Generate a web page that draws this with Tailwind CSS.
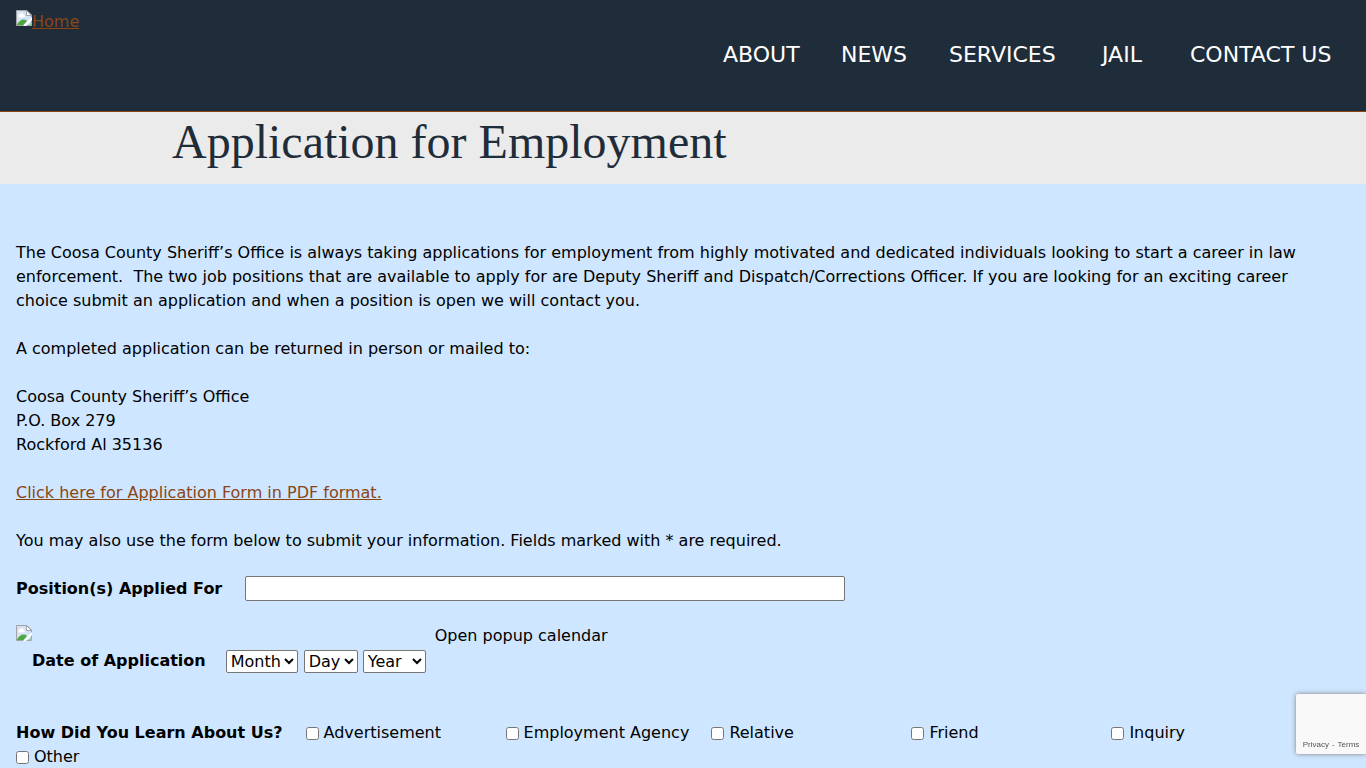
<!DOCTYPE html>
<html lang="en">
<head>
  <meta charset="UTF-8" />
  <meta name="viewport" content="width=device-width, initial-scale=1" />
  <title>Application for Employment</title>
  <script src="https://cdn.jsdelivr.net/npm/@tailwindcss/browser@4"></script>
</head>
<body class="bg-[#cee6ff] text-black text-base leading-6 font-[Verdana,'DejaVu_Sans',sans-serif] overflow-x-hidden">

  <!-- missing image icon, used by the logo and the calendar -->
  <svg class="hidden">
    <symbol id="missing" viewBox="0 0 16 16">
      <path d="M0.5 0.5H11L15.5 5V15.5H0.5Z" fill="#c6d9f4" stroke="#a3a3a3" />
      <path d="M1 1H10.5V5.5H15V8L8 15H1Z" fill="#d4e3f8" />
      <path d="M3 7.5a1.8 1.8 0 0 1 1-3.2a2 2 0 0 1 3.6 0.4a1.5 1.5 0 0 1 0.4 2.8Z" fill="#fff" />
      <path d="M1 14.5C2.5 11.5 5 9.5 7.5 9.5C9 9.5 10 10 11 11L7.5 15H1Z" fill="#4fa83d" />
      <path d="M10.5 0.5V5.5H15.5Z" fill="#fff" stroke="#a3a3a3" />
      <path d="M7 16L16 7V10L10 16Z" fill="#fff" />
      <path d="M12.5 15.5L15.5 12.5V15.5Z" fill="#8fc98a" />
    </symbol>
  </svg>

  <header class="flex justify-between bg-[#1f2d3a] border-b border-[#8b4513] h-28 px-4">
    <a href="#" class="flex items-start pt-[10px] h-fit text-[#8b4513] underline">
      <svg class="w-4 h-4"><use href="#missing" /></svg>Home
    </a>
    <nav class="pt-[39px] pr-4">
      <ul class="flex gap-10 text-[22px] leading-8 text-white">
        <li class="min-w-[78px]"><a href="#">ABOUT</a></li>
        <li class="min-w-[68px]"><a href="#">NEWS</a></li>
        <li class="min-w-[113px]"><a href="#">SERVICES</a></li>
        <li class="min-w-[48px]"><a href="#">JAIL</a></li>
        <li class="min-w-[144px]"><a href="#">CONTACT US</a></li>
      </ul>
    </nav>
  </header>

  <div class="bg-[#ebebeb] px-[172px] pt-[2px] pb-[14px]">
    <h1 class="font-['Liberation_Serif',serif] text-[48px] leading-[56px] text-[#1f2d3a]">Application for Employment</h1>
  </div>

  <main class="px-4 pt-[57px]">
    <p class="mb-6 pr-8">The Coosa County Sheriff’s Office is always taking applications for employment from highly motivated and dedicated individuals looking to start a career in law enforcement.&nbsp; The two job positions that are available to apply for are Deputy Sheriff and Dispatch/Corrections Officer. If you are looking for an exciting career choice submit an application and when a position is open we will contact you.</p>
    <p class="mb-6">A completed application can be returned in person or mailed to:</p>
    <p class="mb-6">Coosa County Sheriff’s Office<br />P.O. Box 279<br />Rockford Al 35136</p>
    <p class="mb-6"><a href="#" class="text-[#8b4513] underline">Click here for Application Form in PDF format.</a></p>
    <p class="mb-[23px]">You may also use the form below to submit your information. Fields marked with * are required.</p>

    <form>
      <div class="flex items-center mb-6">
        <label for="position" class="font-bold mr-[23px]">Position(s) Applied For</label>
        <input type="text" id="position" class="w-[600px] h-[25px] px-1 bg-white border border-[#767676] rounded-xs" />
      </div>

      <div class="flex items-start">
        <svg class="w-4 h-4"><use href="#missing" /></svg>
        <div class="flex items-center mt-6 h-6">
          <span class="font-bold mr-5">Date of Application</span>
          <select aria-label="Month" class="w-[72px] h-[23px] mr-[6px] leading-5 bg-white border border-[#767676] rounded-xs">
            <option>Month</option>
          </select>
          <select aria-label="Day" class="w-[54px] h-[23px] mr-[5px] leading-5 bg-white border border-[#767676] rounded-xs">
            <option>Day</option>
          </select>
          <select aria-label="Year" class="w-[63px] h-[23px] leading-5 bg-white border border-[#767676] rounded-xs">
            <option>Year</option>
          </select>
        </div>
        <span class="ml-[9px] -mt-px">Open popup calendar</span>
      </div>

      <fieldset class="flex flex-wrap items-center mt-12">
        <span class="font-bold mr-[23px]">How Did You Learn About Us?</span>
        <label class="flex items-center gap-[5px] min-w-[200px] pr-[22px]"><input type="checkbox" class="w-[13px] h-[13px]" />Advertisement</label>
        <label class="flex items-center gap-[5px] min-w-[200px] pr-[22px]"><input type="checkbox" class="w-[13px] h-[13px]" />Employment Agency</label>
        <label class="flex items-center gap-[5px] min-w-[200px] pr-[22px]"><input type="checkbox" class="w-[13px] h-[13px]" />Relative</label>
        <label class="flex items-center gap-[5px] min-w-[200px] pr-[22px]"><input type="checkbox" class="w-[13px] h-[13px]" />Friend</label>
        <label class="flex items-center gap-[5px] min-w-[200px] pr-[22px]"><input type="checkbox" class="w-[13px] h-[13px]" />Inquiry</label>
        <label class="flex items-center gap-[5px] min-w-[200px] pr-[22px]"><input type="checkbox" class="w-[13px] h-[13px]" />Other</label>
      </fieldset>
    </form>
  </main>

  <!-- recaptcha badge -->
  <div class="fixed right-0 bottom-[14px] w-[70px] h-[60px] flex items-end justify-center gap-[3px] pb-1 bg-[#f9f9f9] rounded-l-xs shadow-[0_0_5px_gray] font-['Liberation_Sans',sans-serif] text-[8px] leading-[10px] text-[#555]">
    <a href="#">Privacy</a><span>-</span><a href="#">Terms</a>
  </div>

</body>
</html>
